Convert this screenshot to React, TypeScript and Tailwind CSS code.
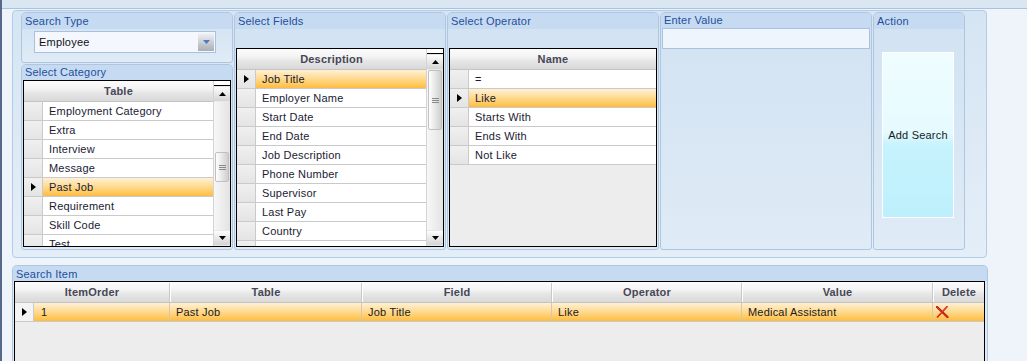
import React from "react";

const HEADER_BG =
  "bg-[linear-gradient(to_bottom,#fcfcfc_0%,#f3f3f3_40%,#e6e6e6_60%,#d9d9d9_100%)]";
const SEL_BG =
  "bg-[linear-gradient(to_bottom,#fff0d4_0%,#ffe0a4_35%,#ffcc66_75%,#ffbb40_100%)]";
const ROWHDR_BG = "bg-[linear-gradient(to_bottom,#f0f0f0,#e4e4e4)]";

function Tri() {
  return (
    <svg width="5" height="8" viewBox="0 0 5 8">
      <path d="M0 0 L5 4 L0 8 Z" fill="#000" />
    </svg>
  );
}

function ScrollBtn({ up }: { up?: boolean }) {
  return (
    <div className="h-[16px] shrink-0 flex items-center justify-center bg-[linear-gradient(to_bottom,#fdfdfd,#d4d4d4)] border-y border-[#e8e8e8]">
      <svg width="7" height="4" viewBox="0 0 7 4">
        {up ? <path d="M0 4 L3.5 0 L7 4 Z" fill="#000" /> : <path d="M0 0 L3.5 4 L7 0 Z" fill="#000" />}
      </svg>
    </div>
  );
}

function Scrollbar({ thumbClass }: { thumbClass: string }) {
  return (
    <div className="w-[17px] shrink-0 flex flex-col bg-[linear-gradient(to_right,#f7f7f7,#e3e3e3)] border-l border-[#d4d4d4]">
      <div className="h-[5px] shrink-0 bg-white border-b border-black" />
      <ScrollBtn up />
      <div className="flex-1 flex flex-col">
        <div
          className={`${thumbClass} mx-[1px] rounded-[2px] border border-[#c0c0c0] bg-[linear-gradient(to_right,#ffffff,#cfcfcf)] flex flex-col items-center justify-center gap-[1px]`}
        >
          <div className="w-[7px] h-[1px] bg-[#8a8a8a]" />
          <div className="w-[7px] h-[1px] bg-[#8a8a8a]" />
          <div className="w-[7px] h-[1px] bg-[#8a8a8a]" />
        </div>
      </div>
      <ScrollBtn />
    </div>
  );
}

function Grid({
  h,
  header,
  rows,
  sel,
  thumbClass,
}: {
  h: string;
  header: string;
  rows: string[];
  sel: number;
  thumbClass?: string;
}) {
  return (
    <div className={`mx-[1px] ${h} shrink-0 border border-black flex overflow-hidden bg-[#ededed]`}>
      <div className="flex-1 flex flex-col min-w-0">
        <div
          className={`h-[21px] shrink-0 pt-[1px] border-b border-[#c4c4c4] ${HEADER_BG} flex items-center justify-center font-bold text-[#474756]`}
        >
          {header}
        </div>
        {rows.map((r, i) => (
          <div key={i} className="h-[19px] shrink-0 flex border-b border-[#cacaca]">
            <div
              className={`w-[19px] shrink-0 border-r border-[#cacaca] ${ROWHDR_BG} flex items-center justify-center`}
            >
              {i === sel && <Tri />}
            </div>
            <div
              className={`flex-1 pl-[6px] pt-[1px] flex items-center whitespace-nowrap text-[#1a1a33] ${
                i === sel ? SEL_BG : "bg-white"
              }`}
            >
              {r}
            </div>
          </div>
        ))}
      </div>
      {thumbClass && <Scrollbar thumbClass={thumbClass} />}
    </div>
  );
}

function Title({ children }: { children: React.ReactNode }) {
  return (
    <div className="h-[16px] shrink-0 bg-[#c6dbf1] px-[3px] leading-[16px] text-[#1f4e9c] whitespace-nowrap">
      {children}
    </div>
  );
}

const PANEL =
  "flex flex-col border border-[#afc6e0] rounded-t-[5px] rounded-b-[3px] overflow-hidden bg-[linear-gradient(to_bottom,#d1e2f2,#dfebf6)]";

function DeleteX() {
  return (
    <svg width="13" height="12" viewBox="0 0 13 12">
      <path d="M1 1 L11.5 11" stroke="#b01010" strokeWidth="2.2" strokeLinecap="round" />
      <path d="M1 1 L11.5 11" stroke="#f03030" strokeWidth="1" strokeLinecap="round" />
      <path d="M11 0.8 L1.5 11" stroke="#c01818" strokeWidth="1.6" strokeLinecap="round" />
      <path d="M11 0.8 L1.5 11" stroke="#f24a3a" strokeWidth="0.7" strokeLinecap="round" />
    </svg>
  );
}

export default function App() {
  const bottomCols = [
    { w: "w-[192px]", label: "Table", val: "Past Job" },
    { w: "w-[190px]", label: "Field", val: "Job Title" },
    { w: "w-[190px]", label: "Operator", val: "Like" },
    { w: "w-[191px]", label: "Value", val: "Medical Assistant" },
  ];

  return (
    <div className="w-[1027px] h-[361px] overflow-hidden bg-[#eff3fa] border-l-2 border-[#56698a] font-['Liberation_Sans',Arial,sans-serif] text-[11px] tracking-[0.2px] flex flex-col">
      <div className="h-[9px] shrink-0 bg-[#dbe6f3] border-b border-[#a6c3e4]" />

      {/* Top group */}
      <div className="pl-[10px] pt-[1px]">
        <div className="w-[975px] h-[248px] border border-[#b3cbe4] rounded-[4px] bg-[linear-gradient(to_bottom,#d6e5f3,#e3eef8)] pl-[8px] pt-[1px] flex gap-[1px]">
          {/* Column 1 */}
          <div className="w-[212px] flex flex-col gap-[1px]">
            <div className={`${PANEL} h-[51px]`}>
              <Title>Search Type</Title>
              <div className="pt-[2px] pl-[12px]">
                <div className="w-[182px] h-[22px] border border-[#a9c1dc] bg-[#f4f8fe] flex">
                  <div className="flex-1 pl-[4px] pt-[1px] flex items-center text-[#111]">Employee</div>
                  <div className="w-[16px] m-[1px] bg-[linear-gradient(to_bottom,#f0f3f8,#c9ccd2_55%,#a9adb5)] flex items-center justify-center">
                    <svg width="7" height="4" viewBox="0 0 7 4">
                      <path d="M0 0 L3.5 4 L7 0 Z" fill="#4c7cc0" />
                    </svg>
                  </div>
                </div>
              </div>
            </div>
            <div className={`${PANEL} h-[186px]`}>
              <div className="h-[15px] shrink-0 bg-[#c6dbf1] px-[3px] leading-[15px] text-[#1f4e9c]">
                Select Category
              </div>
              <Grid
                h="h-[167px]"
                header="Table"
                rows={[
                  "Employment Category",
                  "Extra",
                  "Interview",
                  "Message",
                  "Past Job",
                  "Requirement",
                  "Skill Code",
                  "Test",
                ]}
                sel={4}
                thumbClass="mt-[50px] h-[30px]"
              />
            </div>
          </div>

          {/* Select Fields */}
          <div className={`${PANEL} w-[212px] h-[238px]`}>
            <Title>Select Fields</Title>
            <div className="h-[19px] shrink-0" />
            <Grid
              h="h-[199px]"
              header="Description"
              rows={[
                "Job Title",
                "Employer Name",
                "Start Date",
                "End Date",
                "Job Description",
                "Phone Number",
                "Supervisor",
                "Last Pay",
                "Country",
                "City",
              ]}
              sel={0}
              thumbClass="mt-0 h-[60px]"
            />
          </div>

          {/* Select Operator */}
          <div className={`${PANEL} w-[212px] h-[238px]`}>
            <Title>Select Operator</Title>
            <div className="h-[19px] shrink-0" />
            <Grid
              h="h-[199px]"
              header="Name"
              rows={["=", "Like", "Starts With", "Ends With", "Not Like"]}
              sel={1}
            />
          </div>

          {/* Enter Value */}
          <div className={`${PANEL} w-[212px] h-[238px]`}>
            <div className="h-[15px] shrink-0 bg-[#c6dbf1] px-[3px] leading-[15px] text-[#1f4e9c]">
              Enter Value
            </div>
            <div className="mx-[1px] h-[21px] border border-[#a8c2df] bg-[#eef5fd]" />
          </div>

          {/* Action */}
          <div className={`${PANEL} w-[92px] h-[238px]`}>
            <Title>Action</Title>
            <div className="pl-[8px] pt-[23px]">
              <div className="w-[72px] h-[166px] border border-white bg-[linear-gradient(to_bottom,#effdff_0%,#e6fbff_48%,#c6f3fd_56%,#bdf0fc_100%)] flex items-center justify-center text-[#1a1a1a] whitespace-nowrap">
                Add Search
              </div>
            </div>
          </div>
        </div>
      </div>

      {/* Search Item */}
      <div className="pl-[10px] pt-[7px] flex-1 flex">
        <div className="w-[976px] flex flex-col border border-b-0 border-[#afc6e0] rounded-t-[5px] overflow-hidden bg-[#dfeaf6]">
          <div className="h-[15px] shrink-0 bg-[#c6dbf1] px-[3px] pt-[1px] leading-[15px] text-[#1f4e9c]">
            Search Item
          </div>
          <div className="ml-[1px] w-[971px] flex-1 border border-b-0 border-black bg-[#ededed] flex flex-col">
            <div className={`h-[21px] shrink-0 pt-[1px] flex border-b border-[#c4c4c4] ${HEADER_BG} font-bold text-[#474756]`}>
              <div className="w-[155px] flex items-center justify-center border-r border-[#c8c8c8]">
                ItemOrder
              </div>
              {bottomCols.map((c) => (
                <div
                  key={c.label}
                  className={`${c.w} flex items-center justify-center border-r border-[#c8c8c8] border-l border-l-white`}
                >
                  {c.label}
                </div>
              ))}
              <div className="flex-1 flex items-center justify-center border-l border-l-white">Delete</div>
            </div>
            <div className="h-[19px] shrink-0 flex border-b border-[#cacaca] text-[#1a1a1a]">
              <div className={`w-[19px] shrink-0 border-r border-[#cacaca] bg-[#f4f4f4] flex items-center justify-center`}>
                <Tri />
              </div>
              <div className={`flex-1 flex ${SEL_BG}`}>
                <div className="w-[136px] pl-[7px] pt-[1px] flex items-center border-r border-[#d8c8a8]">1</div>
                {bottomCols.map((c) => (
                  <div key={c.label} className={`${c.w} pl-[6px] pt-[1px] flex items-center border-r border-[#d8c8a8]`}>
                    {c.val}
                  </div>
                ))}
                <div className="flex-1 pl-[3px] flex items-center">
                  <DeleteX />
                </div>
              </div>
            </div>
          </div>
        </div>
      </div>
    </div>
  );
}
